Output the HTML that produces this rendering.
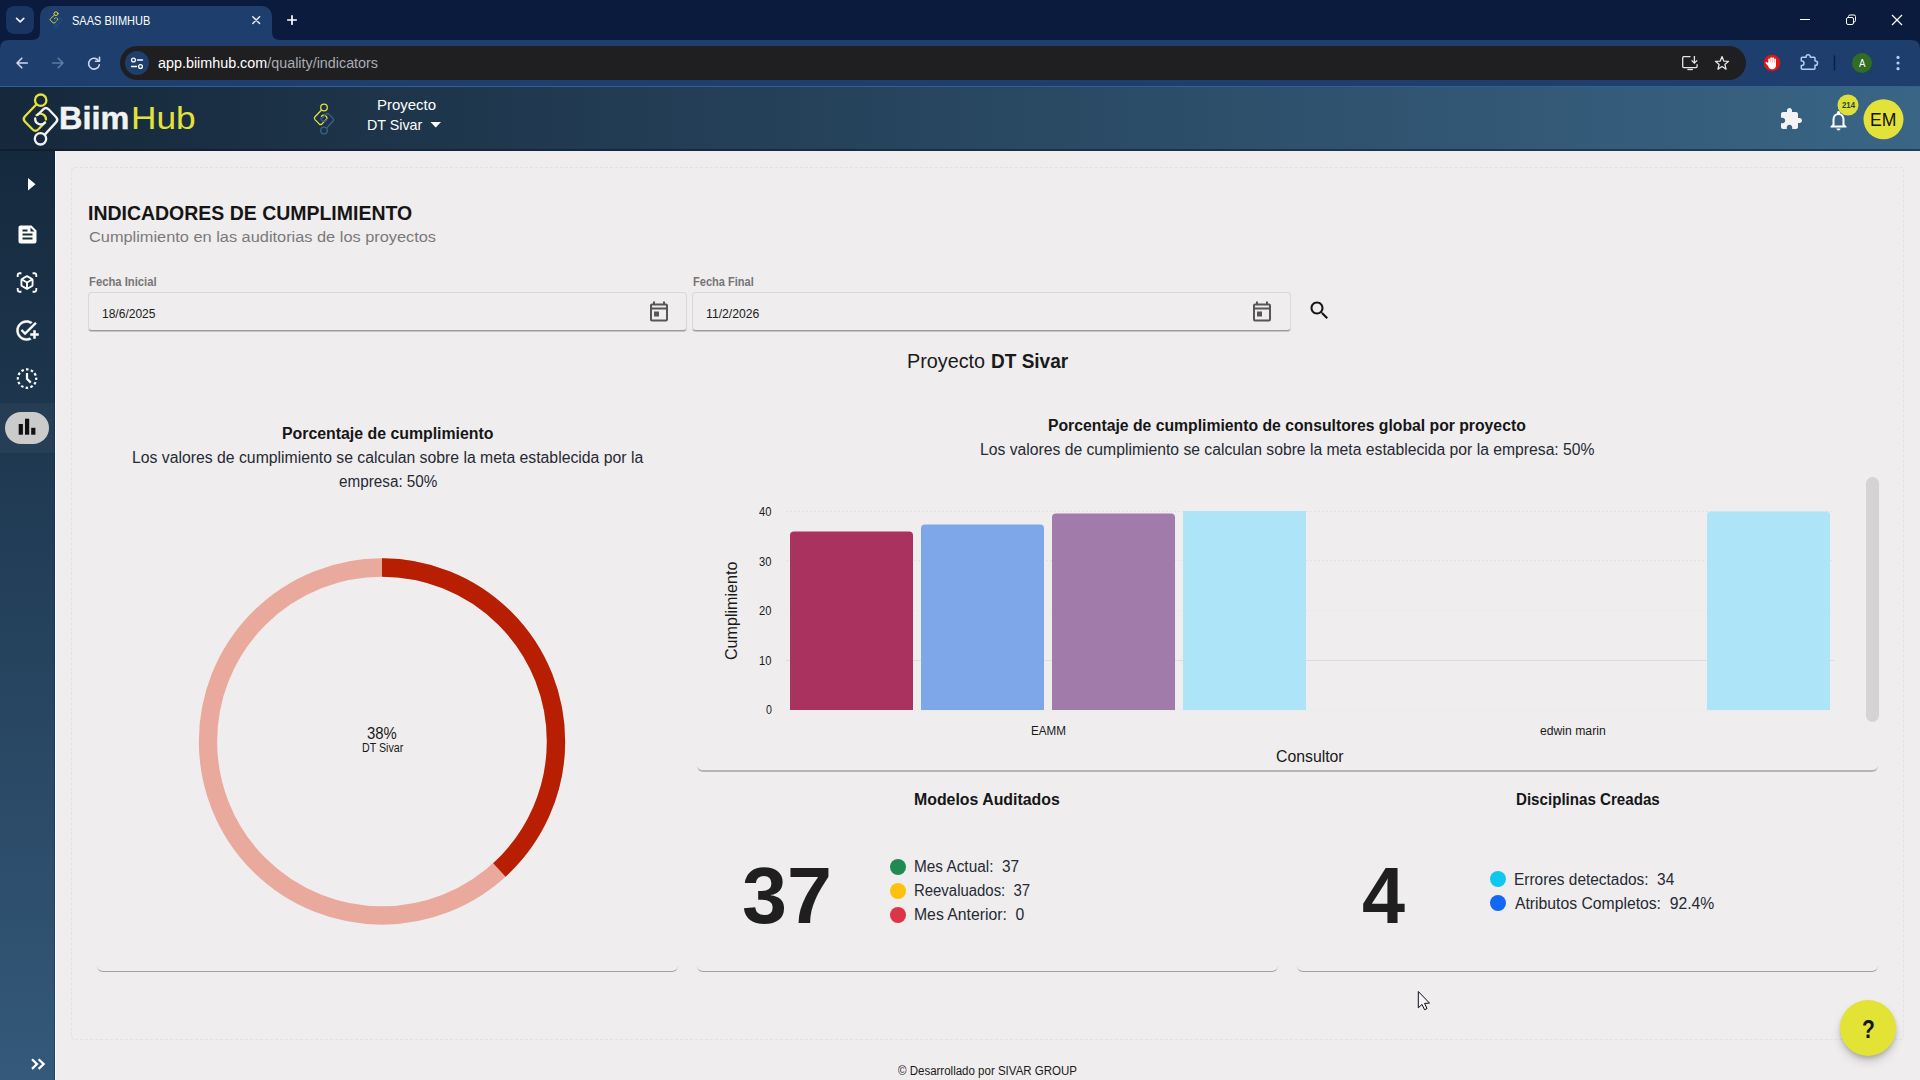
<!DOCTYPE html>
<html lang="es">
<head>
<meta charset="utf-8">
<title>SAAS BIIMHUB</title>
<style>
*{box-sizing:border-box;margin:0;padding:0}
html,body{width:1920px;height:1080px;overflow:hidden;background:#efedee;font-family:"Liberation Sans",sans-serif;color:#1a1a1a}
.abs{position:absolute}
.t{position:absolute;white-space:nowrap;line-height:1;transform-origin:0 0}
/* browser chrome */
#tabstrip{left:0;top:0;width:1920px;height:40px;background:#0b1b3e}
#toolbar{left:0;top:40px;width:1920px;height:47px;background:#1e3f6e}
#tab{left:40px;top:6px;width:232px;height:34px;background:#1e3f6e;border-radius:10px 10px 0 0}
#tabdd{left:6px;top:6px;width:28px;height:28px;border-radius:8px;background:#1a3562}
#urlbar{left:120px;top:46px;width:1626px;height:34px;border-radius:17px;background:#1f1f22}
#siteinfo{left:125px;top:51px;width:24px;height:24px;border-radius:12px;background:#1e3f6e}
/* app */
#apphdr{left:0;top:87px;width:1920px;height:64px;background:linear-gradient(90deg,#16283b 0%,#3a6585 100%)}
#sidebar{left:0;top:151px;width:55px;height:929px;background:linear-gradient(180deg,#15293d 0%,#34597a 100%)}
#main{left:55px;top:151px;width:1865px;height:929px;background:#efedee}
#card{left:71px;top:167px;width:1833px;height:873px;border:1px dashed #dfe3e3;border-radius:4px}
.inp{position:absolute;top:292px;height:39px;border:1px solid #d6d9dc;border-bottom:1px solid #9b999a;border-radius:4px;background:#efedee;box-shadow:0 1px 0 rgba(0,0,0,.16)}
.pcard{position:absolute;border-bottom:1px solid #a3a1a2;border-radius:0 0 6px 6px}
.dot{position:absolute;width:16px;height:16px;border-radius:8px}
.lg{font-size:16px;color:#222;letter-spacing:.3px}
</style>
</head>
<body>
<!-- ===== Browser chrome ===== -->
<div class="abs" id="tabstrip"></div>
<div class="abs" id="toolbar"></div>
<div class="abs" id="tabdd"></div>
<div class="abs" id="tab"></div>
<div class="abs" id="urlbar"></div>
<div class="abs" id="siteinfo"></div>


<!-- chrome icons -->
<svg class="abs" style="left:0;top:0" width="1920" height="87" viewBox="0 0 1920 87" fill="none">
  <!-- tab dropdown chevron -->
  <path d="M16.600 18.300l3.600 3.600 3.600-3.600" stroke="#e8ecf4" stroke-width="1.700" stroke-linecap="round" stroke-linejoin="round"/>
  <!-- tab curves -->
  <path d="M32 40 Q40 40 40 32 L40 40Z" fill="#1e3f6e"/>
  <path d="M280 40 Q272 40 272 32 L272 40Z" fill="#1e3f6e"/>
  <!-- favicon -->
  <g transform="translate(56,20) scale(.62,.55) translate(-324,-119)" stroke-width="1.600" stroke-linecap="round" stroke-linejoin="round">
    <circle cx="324" cy="107.500" r="3.300" stroke="#e2e23a"/>
    <path d="M321.500 110l-6.500 6.800q-1.300 1.400 0 2.800l4.200 4.300q1.400 1.300 2.800 0l4-4.200" stroke="#e2e23a"/>
    <path d="M327 118.500a3.200 3.200 0 0 0-5.500-2.300" stroke="#e2e23a"/>
    <circle cx="324" cy="130.500" r="3.300" stroke="#24527a"/>
    <path d="M326.500 128l6.500-6.800q1.300-1.400 0-2.800l-4.200-4.300q-1.400-1.300-2.800 0l-3.500 3.600" stroke="#24527a"/>
    <path d="M320.800 118a3.200 3.200 0 0 0 5.500 2.300" stroke="#24527a"/>
  </g>
  <!-- tab close -->
  <path d="M252.800 16.700l6.800 6.800M259.600 16.700l-6.800 6.800" stroke="#e8ecf4" stroke-width="1.500" stroke-linecap="round"/>
  <!-- new tab plus -->
  <path d="M287.800 20h8.400M292 15.800v8.400" stroke="#fff" stroke-width="1.700" stroke-linecap="round"/>
  <!-- window controls -->
  <path d="M1800 19.500h10" stroke="#fff" stroke-width="1"/>
  <rect x="1846.500" y="17.500" width="7" height="7" rx="1.500" stroke="#fff" stroke-width="1"/>
  <path d="M1848.500 17.500v-1a1.500 1.500 0 0 1 1.500-1.500h4a1.500 1.500 0 0 1 1.500 1.500v4a1.500 1.500 0 0 1-1.500 1.500h-1" stroke="#fff" stroke-width="1"/>
  <path d="M1892 15l10 10M1902 15l-10 10" stroke="#fff" stroke-width="1.200"/>
  <!-- back -->
  <path d="M27.300 63H17.200M21.800 58.200L17 63l4.800 4.800" stroke="#cfd8e8" stroke-width="1.600" stroke-linecap="round" stroke-linejoin="round"/>
  <!-- forward (dim) -->
  <path d="M52.700 63h10.100M58.200 58.200L63 63l-4.800 4.800" stroke="#5f7ba3" stroke-width="1.600" stroke-linecap="round" stroke-linejoin="round"/>
  <!-- reload -->
  <path d="M98.600 60.800a5.400 5.400 0 1 0 .7 4" stroke="#cfd8e8" stroke-width="1.600" stroke-linecap="round"/>
  <path d="M99.500 57.200v4h-4" stroke="#cfd8e8" stroke-width="1.600" stroke-linecap="round" stroke-linejoin="round"/>
  <!-- site info (tune) -->
  <circle cx="133.500" cy="60" r="1.900" stroke="#fff" stroke-width="1.300"/>
  <path d="M137.500 60h5" stroke="#fff" stroke-width="1.400" stroke-linecap="round"/>
  <circle cx="140.500" cy="66.500" r="1.900" stroke="#fff" stroke-width="1.300"/>
  <path d="M131.500 66.500h5" stroke="#fff" stroke-width="1.400" stroke-linecap="round"/>
  <!-- install icon -->
  <path d="M1690.500 56.700h-6.800a1 1 0 0 0-1 1v8.900a1 1 0 0 0 1 1h12.400a1 1 0 0 0 1-1v-2.300" stroke="#e3e6ea" stroke-width="1.300" stroke-linecap="butt"/>
  <path d="M1687.400 69.500h5.500" stroke="#e3e6ea" stroke-width="1.300"/>
  <path d="M1694.400 56v7M1691.600 60.400l2.800 2.800 2.800-2.800" stroke="#e3e6ea" stroke-width="1.300" stroke-linejoin="miter"/>
  <!-- star -->
  <path d="M1722.00 56.60L1723.76 61.07L1728.56 61.37L1724.85 64.43L1726.06 69.08L1722.00 66.50L1717.94 69.08L1719.15 64.43L1715.44 61.37L1720.24 61.07z" stroke="#e3e6ea" stroke-width="1.300" stroke-linejoin="round"/>
  <!-- red stop-hand extension -->
  <circle cx="1772" cy="63" r="8.300" fill="#e31414"/>
  <g fill="#fff">
    <rect x="1768.300" y="58.600" width="1.700" height="6" rx=".85"/>
    <rect x="1770.300" y="57.300" width="1.700" height="7" rx=".85"/>
    <rect x="1772.300" y="57.300" width="1.700" height="7" rx=".85"/>
    <rect x="1774.300" y="58.600" width="1.700" height="6" rx=".85"/>
    <path d="M1768.300 62.500h7.700v3c0 2.300-1.600 3.700-3.900 3.700s-3.800-1.400-3.800-3.700z"/>
    <path d="M1769 67l-3.200-3.400a.95.950 0 0 1 1.400-1.300l2.300 2.200z"/>
  </g>
  <!-- extensions puzzle outline -->
  <path d="M1802.200 57.200H1806.100v-.4a2.100 2.100 0 0 1 4.200 0v.4H1814.100a.9.900 0 0 1 .9.900V61.100h.4a2.100 2.100 0 0 1 0 4.200h-.4V68.300a.9.900 0 0 1-.9.900H1802.200a.9.900 0 0 1-.9-.9V65.400h.5a2.200 2.200 0 0 0 0-4.400h-.5V58.100a.9.900 0 0 1 .9-.9z" stroke="#b4cdf3" stroke-width="1.500" stroke-linejoin="round"/>
  <path d="M1920 40v9q0-9-9-9zM0 40v9q0-9 9-9z" fill="#0b1b3e"/>
  <!-- divider -->
  <path d="M1834.500 55.500v15" stroke="#0c1f45" stroke-width="1.500"/>
  <!-- profile -->
  <circle cx="1862" cy="63" r="10" fill="#316d22"/>
  <!-- menu dots -->
  <circle cx="1898" cy="57.400" r="1.600" fill="#b7cdf5"/><circle cx="1898" cy="63" r="1.600" fill="#b7cdf5"/><circle cx="1898" cy="68.700" r="1.600" fill="#b7cdf5"/>
</svg>

<!-- ===== App header ===== -->
<div class="abs" id="apphdr"></div>
<div class="abs" style="left:0;top:86px;width:1920px;height:1px;background:#325f96"></div>
<div class="abs" style="left:0;top:149px;width:1920px;height:2px;background:rgba(8,18,32,.45)"></div>


<!-- app header icons -->
<svg class="abs" style="left:0;top:87px" width="1920" height="64" viewBox="0 87 1920 64" fill="none">
  <!-- main logo -->
  <g stroke-width="2.300" stroke-linecap="round" stroke-linejoin="round">
    <circle cx="40.700" cy="100.200" r="5.700" stroke="#e2e23a"/>
    <path d="M36.300 104.500L25 116.300q-2.600 2.700 0 5.400L32.700 129.500q2.700 2.600 5.400 0L45 122.500" stroke="#e2e23a"/>
    <path d="M46 119.500a5.600 5.600 0 0 0-9.500-4.200" stroke="#e2e23a"/>
    <circle cx="40.500" cy="138.800" r="5.700" stroke="#f2f2f2"/>
    <path d="M44.800 134.600L56 122.400q2.600-2.700 0-5.400L48.600 109.300q-2.700-2.600-5.400 0L37.500 115" stroke="#f2f2f2"/>
    <path d="M35.200 118.500a5.600 5.600 0 0 0 9.800 4" stroke="#f2f2f2"/>
  </g>
  <!-- small logo -->
  <g stroke-width="1.300" stroke-linecap="round" stroke-linejoin="round">
    <circle cx="324" cy="107.500" r="3.300" stroke="#e2e23a"/>
    <path d="M321.500 110l-6.500 6.800q-1.300 1.400 0 2.800l4.200 4.300q1.400 1.300 2.800 0l4-4.200" stroke="#e2e23a"/>
    <path d="M327 118.500a3.200 3.200 0 0 0-5.500-2.300" stroke="#e2e23a"/>
    <circle cx="324" cy="130.500" r="3.300" stroke="#3f6183"/>
    <path d="M326.500 128l6.500-6.800q1.300-1.400 0-2.800l-4.200-4.300q-1.400-1.300-2.800 0l-3.500 3.600" stroke="#3f6183"/>
    <path d="M320.800 118a3.200 3.200 0 0 0 5.500 2.300" stroke="#3f6183"/>
  </g>
  <!-- caret -->
  <path d="M430.500 122h10.500l-5.250 5.500z" fill="#fff"/>
  <!-- puzzle (filled, material extension) -->
  <g transform="translate(1779,107) scale(1)">
    <path d="M20.500 11H19V7c0-1.100-.9-2-2-2h-4V3.500C13 2.120 11.880 1 10.500 1S8 2.120 8 3.500V5H4c-1.100 0-1.990.9-1.990 2v3.800H3.500c1.490 0 2.700 1.210 2.700 2.700s-1.210 2.700-2.700 2.700H2V20c0 1.100.9 2 2 2h3.800v-1.500c0-1.490 1.210-2.700 2.700-2.700 1.490 0 2.700 1.210 2.700 2.700V22H17c1.100 0 2-.9 2-2v-4h1.500c1.380 0 2.500-1.120 2.500-2.500S21.880 11 20.500 11z" fill="#f4f2f3"/>
  </g>
  <!-- bell -->
  <g transform="translate(1826.500,108.500)">
    <path d="M12 22c1.100 0 2-.9 2-2h-4c0 1.100.9 2 2 2zm6-6v-5c0-3.070-1.630-5.640-4.500-6.320V4c0-.83-.67-1.500-1.500-1.500s-1.500.67-1.500 1.500v.68C7.640 5.360 6 7.920 6 11v5l-2 2v1h16v-1l-2-2zm-2 1H8v-6c0-2.480 1.510-4.500 4-4.500s4 2.020 4 4.500v6z" fill="#fff"/>
  </g>
  <circle cx="1848" cy="105" r="10.500" fill="#dfdf3a"/>
  <circle cx="1883.500" cy="119.300" r="20" fill="#e2e23a"/>
</svg>

<!-- ===== Sidebar & main ===== -->
<div class="abs" id="sidebar"></div>

<!-- sidebar icons -->
<div class="abs" style="left:0;top:403px;width:55px;height:50px;background:rgba(255,255,255,.04)"></div>
<div class="abs" style="left:5px;top:412px;width:44px;height:32px;border-radius:16px;background:#cbcbcb"></div>
<svg class="abs" style="left:0;top:151px" width="55" height="929" viewBox="0 151 55 929" fill="none">
  <path d="M28 178l7.500 6.250L28 190.500z" fill="#fff"/>
  <!-- feed/doc -->
  <g transform="translate(15.500,222.500)"><path d="M16 3H5c-1.100 0-2 .9-2 2v14c0 1.100.9 2 2 2h14c1.100 0 2-.9 2-2V8l-5-5zM7 7h5v2H7V7zm10 10H7v-2h10v2zm0-4H7v-2h10v2zm-2-4V5l4 4h-4z" fill="#fff"/></g>
  <!-- view_in_ar -->
  <g transform="translate(15.840,271.340) scale(.93)"><path d="M3 4c0-.55.45-1 1-1h2V1H4C2.340 1 1 2.340 1 4v2h2V4zm0 16v-2H1v2c0 1.660 1.340 3 3 3h2v-2H4c-.55 0-1-.45-1-1zM20 1h-2v2h2c.55 0 1 .45 1 1v2h2V4c0-1.660-1.340-3-3-3zm1 19c0 .55-.45 1-1 1h-2v2h2c1.660 0 3-1.340 3-3v-2h-2v2zm-2-5.130V9.130c0-.72-.38-1.380-1-1.730l-5-2.880c-.31-.18-.65-.27-1-.27s-.69.090-1 .27L6 7.390c-.62.360-1 1.020-1 1.740v5.740c0 .72.380 1.380 1 1.730l5 2.880c.31.180.65.270 1 .27s.69-.090 1-.27l5-2.880c.62-.35 1-1.010 1-1.730zm-8 2.300l-4-2.300v-4.630l4 2.330v4.600zm1-6.330L8.040 8.530 12 6.250l3.960 2.280L12 10.840zm5 4.030l-4 2.300v-4.600l4-2.330v4.630z" fill="#fff"/></g>
  <!-- add_task -->
  <g transform="translate(14.500,318.500)"><path stroke="#fff" stroke-width=".5" d="M22 5.180L10.590 16.600l-4.240-4.240 1.410-1.410 2.830 2.830 10-10L22 5.180zM12 20c-4.410 0-8-3.590-8-8s3.590-8 8-8c1.570 0 3.040.46 4.280 1.250l1.450-1.450C16.100 2.670 14.130 2 12 2 6.480 2 2 6.480 2 12s4.480 10 10 10c1.730 0 3.360-.44 4.780-1.220l-1.500-1.500c-1 .46-2.110.72-3.280.72zm7-5h-3v2h3v3h2v-3h3v-2h-3v-3h-2v3z" fill="#fff"/></g>
  <!-- history_toggle_off -->
  <circle cx="27" cy="378.600" r="9.200" stroke="#fff" stroke-width="2.200" stroke-dasharray="2.600 2.217" stroke-dashoffset="1.300"/>
  <path d="M27 373v5.800l3.800 3.800" stroke="#fff" stroke-width="2.200"/>
  <!-- bar chart -->
  <rect x="18.700" y="424" width="4.200" height="10.700" fill="#111"/>
  <rect x="25" y="418.700" width="4.200" height="16" fill="#111"/>
  <rect x="31.200" y="427.800" width="4.200" height="6.900" fill="#111"/>
  <!-- >> -->
  <path d="M32 1059.300l5 4.800-5 4.800M38.600 1059.300l5.100 4.800-5.100 4.800" stroke="#fff" stroke-width="2.200"/>
</svg>
<div class="abs" id="main"></div>
<div class="abs" style="left:54px;top:151px;width:1px;height:929px;background:rgba(10,30,60,.35)"></div>
<div class="abs" style="left:55px;top:151px;width:1px;height:929px;background:#faf9fa"></div>
<div class="abs" id="card"></div>


<div class="inp" style="left:88px;width:599px"></div>
<div class="inp" style="left:692px;width:599px"></div>



<!-- calendar + search icons -->
<svg class="abs" style="left:640px;top:295px" width="700" height="36" viewBox="640 295 700 36" fill="none">
  <g transform="translate(647,299.500)"><path d="M19 4h-1V2h-2v2H8V2H6v2H5c-1.110 0-1.990.9-1.990 2L3 20c0 1.100.89 2 2 2h14c1.100 0 2-.9 2-2V6c0-1.100-.9-2-2-2zm0 16H5V10h14v10zM5 8V6h14v2H5zm2 4h5v5H7v-5z" fill="#575556"/></g>
  <g transform="translate(1250,299.500)"><path d="M19 4h-1V2h-2v2H8V2H6v2H5c-1.110 0-1.990.9-1.990 2L3 20c0 1.100.89 2 2 2h14c1.100 0 2-.9 2-2V6c0-1.100-.9-2-2-2zm0 16H5V10h14v10zM5 8V6h14v2H5zm2 4h5v5H7v-5z" fill="#575556"/></g>
  <g transform="translate(1307.500,298.400)"><path d="M15.500 14h-.79l-.28-.27C15.410 12.590 16 11.110 16 9.500 16 5.910 13.090 3 9.500 3S3 5.910 3 9.500 5.910 16 9.500 16c1.610 0 3.090-.59 4.230-1.570l.27.28v.79l5 4.990L20.490 19l-4.990-5zm-6 0C7.010 14 5 11.990 5 9.500S7.010 5 9.500 5 14 7.010 14 9.500 11.990 14 9.500 14z" fill="#151515"/></g>
</svg>

<!-- left card: donut -->
<div class="pcard" style="left:97px;top:400px;width:581px;height:572px"></div>
<svg class="abs" style="left:190px;top:550px" width="384" height="384" viewBox="190 550 384 384" fill="none">
  <circle cx="382" cy="741.500" r="174" stroke="#e9a99c" stroke-width="18.300"/>
  <circle cx="382" cy="741.500" r="174" stroke="#b81f02" stroke-width="18.300" stroke-dasharray="417.600 1093.270" transform="rotate(-90 382 741.500)"/>
</svg>

<!-- right top card: bar chart -->
<div class="pcard" style="left:697px;top:400px;width:1181px;height:372px;border-bottom-width:2px;border-bottom-color:#b6b4b5"></div>
<svg class="abs" style="left:700px;top:470px" width="1180" height="300" viewBox="700 470 1180 300" fill="none">
  <g stroke="#dfe4e4" stroke-width="1">
    <path d="M786 511.500H1834" stroke-dasharray="2 2"/>
    <path d="M786 560.500H1834" stroke-dasharray="2 2"/>
    <path d="M786 610.500H1834" stroke-dasharray="1 3"/>
    <path d="M786 660.500H1834" stroke="#dcdcdc"/>
    <path d="M786 710.500H1834" stroke-dasharray="1 3"/>
  </g>
  <path d="M790 710V535.500q0-4 4-4h115q4 0 4 4V710z" fill="#a9335e"/>
  <path d="M921 710V528.500q0-4 4-4h115q4 0 4 4V710z" fill="#7ea7ea"/>
  <path d="M1052 710V517.500q0-4 4-4h115q4 0 4 4V710z" fill="#a17ba9"/>
  <path d="M1183 710V511h123V710z" fill="#ade4f7"/>
  <path d="M1707 710V515.500q0-4 4-4h115q4 0 4 4V710z" fill="#ade4f7"/>
  <rect x="1866" y="477" width="13" height="245" rx="6.500" fill="#d5d3d4"/>
  <g font-family="Liberation Sans, sans-serif" font-size="12" fill="#1a1a1a">
    <text transform="translate(737,610.800) rotate(-90)" text-anchor="middle" font-size="16" textLength="98.500" lengthAdjust="spacingAndGlyphs">Cumplimiento</text>
  </g>
</svg>

<!-- bottom cards -->
<div class="pcard" style="left:697px;top:776px;width:581px;height:196px"></div>
<div class="pcard" style="left:1297px;top:776px;width:581px;height:196px"></div>
<div class="dot" style="left:890px;top:859px;background:#1f8a54"></div>
<div class="dot" style="left:890px;top:883px;background:#fdc10f"></div>
<div class="dot" style="left:890px;top:907px;background:#dc3545"></div>
<div class="dot" style="left:1490px;top:871px;background:#10c8ee"></div>
<div class="dot" style="left:1490px;top:895px;background:#1268f3"></div>

<!-- help button -->
<div class="abs" style="left:1840px;top:1000px;width:56px;height:56px;border-radius:28px;background:#e3e335;box-shadow:0 3px 5px -1px rgba(0,0,0,.2),0 6px 10px rgba(0,0,0,.14)"></div>
<!-- cursor -->
<svg class="abs" style="left:1416px;top:990px" width="16" height="24" viewBox="0 0 16 24"><path d="M2.300 1.500V17.800L6 14.400l2.500 5.300 2.500-1.100-2.400-5.200 4.900-.3z" fill="#f6f5f6" stroke="#0c0c14" stroke-width="1" stroke-linejoin="miter"/></svg>

<!-- texts -->
<div class="t" id="tabtitle" style="left:72.3px;top:15.0px;font-size:12px;color:#ffffff;transform:scaleX(0.9174);">SAAS BIIMHUB</div>
<div class="t" id="url" style="left:157.5px;top:56.0px;font-size:14px;color:#ffffff;transform:scaleX(1.0243);">app.biimhub.com<span style="color:#a9adb3">/quality/indicators</span></div>
<div class="t" id="profA" style="left:1858.6px;top:58.0px;font-size:11px;color:#ffffff;transform:scaleX(0.8750);">A</div>
<div class="t" id="biim" style="left:58.9px;top:103.0px;font-size:31px;color:#f2f2f2;font-weight:bold;transform:scaleX(1.0454);-webkit-text-stroke:.5px #f2f2f2;">Biim</div>
<div class="t" id="hub" style="left:131.0px;top:103.0px;font-size:31px;color:#e2e23a;transform:scaleX(1.1375);">Hub</div>
<div class="t" id="proy" style="left:377.3px;top:97.0px;font-size:15px;color:#ffffff;transform:scaleX(0.9974);">Proyecto</div>
<div class="t" id="dts" style="left:366.7px;top:117.0px;font-size:15px;color:#ffffff;transform:scaleX(0.9522);">DT Sivar</div>
<div class="t" id="b214" style="left:1841.6px;top:101.0px;font-size:8.5px;color:#24453a;font-weight:bold;transform:scaleX(0.9132);">214</div>
<div class="t" id="em" style="left:1869.6px;top:112.0px;font-size:17.5px;color:#111111;transform:scaleX(1.0052);">EM</div>
<div class="t" id="h1" style="left:87.9px;top:203.0px;font-size:20px;color:#151515;font-weight:bold;transform:scaleX(0.9734);">INDICADORES DE CUMPLIMIENTO</div>
<div class="t" id="sub" style="left:88.9px;top:229.0px;font-size:15.5px;color:#7b797a;transform:scaleX(1.0545);">Cumplimiento en las auditorias de los proyectos</div>
<div class="t" id="fi" style="left:88.9px;top:276.0px;font-size:12px;color:#777576;font-weight:bold;transform:scaleX(0.9387);">Fecha Inicial</div>
<div class="t" id="ff" style="left:692.9px;top:276.0px;font-size:12px;color:#777576;font-weight:bold;transform:scaleX(0.9196);">Fecha Final</div>
<div class="t" id="d1" style="left:101.9px;top:308.0px;font-size:12.5px;color:#222222;transform:scaleX(0.9612);">18/6/2025</div>
<div class="t" id="d2" style="left:705.8px;top:308.0px;font-size:12.5px;color:#222222;transform:scaleX(0.9757);">11/2/2026</div>
<div class="t" id="ptitle" style="left:906.5px;top:352.0px;font-size:19.5px;color:#1a1a1a;transform:scaleX(1.0144);">Proyecto</div>
<div class="t" id="ptitleb" style="left:991.4px;top:352.0px;font-size:19.5px;color:#1a1a1a;font-weight:bold;transform:scaleX(0.9755);">DT Sivar</div>
<div class="t" id="lc1" style="left:281.5px;top:426.0px;font-size:16px;color:#161616;font-weight:bold;transform:scaleX(0.9910);">Porcentaje de cumplimiento</div>
<div class="t" id="lc2" style="left:131.7px;top:450.0px;font-size:16px;color:#262a33;transform:scaleX(0.9859);">Los valores de cumplimiento se calculan sobre la meta establecida por la</div>
<div class="t" id="lc3" style="left:338.8px;top:474.0px;font-size:16px;color:#262a33;transform:scaleX(0.9540);">empresa: 50%</div>
<div class="t" id="pct" style="left:367.4px;top:726.0px;font-size:16px;color:#1a1a1a;transform:scaleX(0.9309);">38%</div>
<div class="t" id="pctl" style="left:361.9px;top:742.0px;font-size:12px;color:#1a1a1a;transform:scaleX(0.8870);">DT Sivar</div>
<div class="t" id="rc1" style="left:1048.0px;top:418.0px;font-size:16px;color:#161616;font-weight:bold;transform:scaleX(0.9842);">Porcentaje de cumplimiento de consultores global por proyecto</div>
<div class="t" id="rc2" style="left:980.0px;top:442.0px;font-size:16px;color:#262a33;transform:scaleX(0.9815);">Los valores de cumplimiento se calculan sobre la meta establecida por la empresa: 50%</div>
<div class="t" id="y40" style="left:759.3px;top:506.0px;font-size:12px;color:#1a1a1a;transform:scaleX(0.9288);">40</div>
<div class="t" id="y30" style="left:759.3px;top:556.0px;font-size:12px;color:#1a1a1a;transform:scaleX(0.9288);">30</div>
<div class="t" id="y20" style="left:759.3px;top:605.0px;font-size:12px;color:#1a1a1a;transform:scaleX(0.9288);">20</div>
<div class="t" id="y10" style="left:759.3px;top:655.0px;font-size:12px;color:#1a1a1a;transform:scaleX(0.9288);">10</div>
<div class="t" id="y0" style="left:765.8px;top:704.0px;font-size:12px;color:#1a1a1a;transform:scaleX(0.8857);">0</div>
<div class="t" id="eamm" style="left:1031.0px;top:725.0px;font-size:12px;color:#1a1a1a;transform:scaleX(0.9721);">EAMM</div>
<div class="t" id="edwin" style="left:1540.0px;top:725.0px;font-size:12px;color:#1a1a1a;transform:scaleX(1.0153);">edwin marin</div>
<div class="t" id="cons" style="left:1276.0px;top:749.0px;font-size:16px;color:#1a1a1a;transform:scaleX(0.9877);">Consultor</div>
<div class="t" id="ma" style="left:914.4px;top:792.0px;font-size:16px;color:#161616;font-weight:bold;transform:scaleX(0.9921);">Modelos Auditados</div>
<div class="t" id="dc" style="left:1515.6px;top:792.0px;font-size:16px;color:#161616;font-weight:bold;transform:scaleX(0.9453);">Disciplinas Creadas</div>
<div class="t" id="n37" style="left:742.4px;top:856.0px;font-size:80px;color:#1f1f1f;font-weight:bold;transform:scaleX(1.0107);">37</div>
<div class="t" id="n4" style="left:1362.4px;top:856.0px;font-size:80px;color:#1f1f1f;font-weight:bold;transform:scaleX(0.9682);">4</div>
<div class="t" id="l1" style="left:914.0px;top:859.0px;font-size:16px;color:#262a33;transform:scaleX(0.9600);">Mes Actual:&nbsp; 37</div>
<div class="t" id="l2" style="left:914.1px;top:883.0px;font-size:16px;color:#262a33;transform:scaleX(0.9326);">Reevaluados:&nbsp; 37</div>
<div class="t" id="l3" style="left:914.0px;top:907.0px;font-size:16px;color:#262a33;transform:scaleX(0.9845);">Mes Anterior:&nbsp; 0</div>
<div class="t" id="l4" style="left:1513.6px;top:872.0px;font-size:16px;color:#262a33;transform:scaleX(0.9636);">Errores detectados:&nbsp; 34</div>
<div class="t" id="l5" style="left:1514.6px;top:896.0px;font-size:16px;color:#262a33;transform:scaleX(0.9830);">Atributos Completos:&nbsp; 92.4%</div>
<div class="t" id="help" style="left:1862.0px;top:1016.0px;font-size:26.5px;color:#151515;font-weight:bold;transform:scaleX(0.7929);">?</div>
<div class="t" id="foot" style="left:898.3px;top:1065.0px;font-size:12px;color:#1a1a1a;transform:scaleX(0.9589);">© Desarrollado por SIVAR GROUP</div>
</body>
</html>
